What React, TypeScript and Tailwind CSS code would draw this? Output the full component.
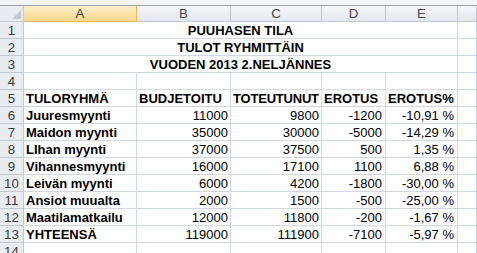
import type { ReactNode } from "react";

const GRID = "grid grid-cols-[24px_113px_94px_91px_64px_72px_1fr]";

const rows = [
  ["Juuresmyynti", "11000", "9800", "-1200", "-10,91 %"],
  ["Maidon myynti", "35000", "30000", "-5000", "-14,29 %"],
  ["LIhan myynti", "37000", "37500", "500", "1,35 %"],
  ["Vihannesmyynti", "16000", "17100", "1100", "6,88 %"],
  ["Leivän myynti", "6000", "4200", "-1800", "-30,00 %"],
  ["Ansiot muualta", "2000", "1500", "-500", "-25,00 %"],
  ["Maatilamatkailu", "12000", "11800", "-200", "-1,67 %"],
  ["YHTEENSÄ", "119000", "111900", "-7100", "-5,97 %"],
];

function Cell({ children, className = "" }: { children?: ReactNode; className?: string }) {
  return (
    <div
      className={`h-[17px] border-b border-r border-[#d0d7e5] pt-[2px] leading-[14px] whitespace-nowrap ${className}`}
    >
      {children}
    </div>
  );
}

function RowNum({ n }: { n: number }) {
  return (
    <div className="h-[17px] border-b border-r border-[#c3c9d1] bg-[#e9edf2] pt-[2px] text-center text-[13.3px] leading-[14px] text-[#3c3c3c]">
      {n}
    </div>
  );
}

function ColHead({ label, active = false }: { label: string; active?: boolean }) {
  return (
    <div
      className={`h-[16px] border-b border-r text-center text-[13.3px] leading-[15px] ${
        active
          ? "border-[#e8b65a] bg-gradient-to-b from-[#fdf0c8] to-[#f8d88e] text-[#3c3c3c]"
          : "border-[#c3c9d1] bg-gradient-to-b from-[#f7f8fa] to-[#e3e7ec] text-[#4a4a4a]"
      }`}
    >
      {label}
    </div>
  );
}

export default function App() {
  return (
    <div className="h-[253px] w-[477px] overflow-hidden bg-white font-['Liberation_Sans',Arial,sans-serif] text-[13px] text-black">
      {/* formula bar remnant */}
      <div className="h-[6px] border-b border-[#9aa2ab] bg-[#f3f4f6]" />

      {/* column headers */}
      <div className={GRID}>
        <div className="relative h-[16px] border-b border-r border-[#c3c9d1] bg-[#e9edf2]">
          <div className="absolute bottom-[2px] right-[2px] h-0 w-0 border-b-[9px] border-l-[9px] border-b-[#c4c9cf] border-l-transparent" />
        </div>
        <ColHead label="A" active />
        <ColHead label="B" />
        <ColHead label="C" />
        <ColHead label="D" />
        <ColHead label="E" />
        <ColHead label="" />
      </div>

      {/* title rows */}
      {["PUUHASEN TILA", "TULOT RYHMITTÄIN", "VUODEN 2013 2.NELJÄNNES"].map((t, i) => (
        <div key={t} className={GRID}>
          <RowNum n={i + 1} />
          <Cell className="col-span-5 text-center font-bold">{t}</Cell>
          <Cell />
        </div>
      ))}

      {/* empty row 4 */}
      <div className={GRID}>
        <RowNum n={4} />
        <Cell />
        <Cell />
        <Cell />
        <Cell />
        <Cell />
        <Cell />
      </div>

      {/* column titles */}
      <div className={GRID}>
        <RowNum n={5} />
        <Cell className="pl-[2px] font-bold">TULORYHMÄ</Cell>
        <Cell className="pl-[2px] font-bold">BUDJETOITU</Cell>
        <Cell className="pl-[2px] font-bold tracking-[-0.2px]">TOTEUTUNUT</Cell>
        <Cell className="pl-[2px] font-bold">EROTUS</Cell>
        <Cell className="pl-[2px] font-bold">EROTUS%</Cell>
        <Cell />
      </div>

      {rows.map((r, i) => (
        <div key={r[0]} className={GRID}>
          <RowNum n={i + 6} />
          <Cell className="pl-[2px] font-bold">{r[0]}</Cell>
          <Cell className="pr-[2px] text-right">{r[1]}</Cell>
          <Cell className="pr-[2px] text-right">{r[2]}</Cell>
          <Cell className="pr-[3px] text-right">{r[3]}</Cell>
          <Cell className="pr-[3px] text-right">{r[4]}</Cell>
          <Cell />
        </div>
      ))}

      {/* row 14, cut off */}
      <div className={GRID}>
        <RowNum n={14} />
        <Cell />
        <Cell />
        <Cell />
        <Cell />
        <Cell />
        <Cell />
      </div>
    </div>
  );
}
